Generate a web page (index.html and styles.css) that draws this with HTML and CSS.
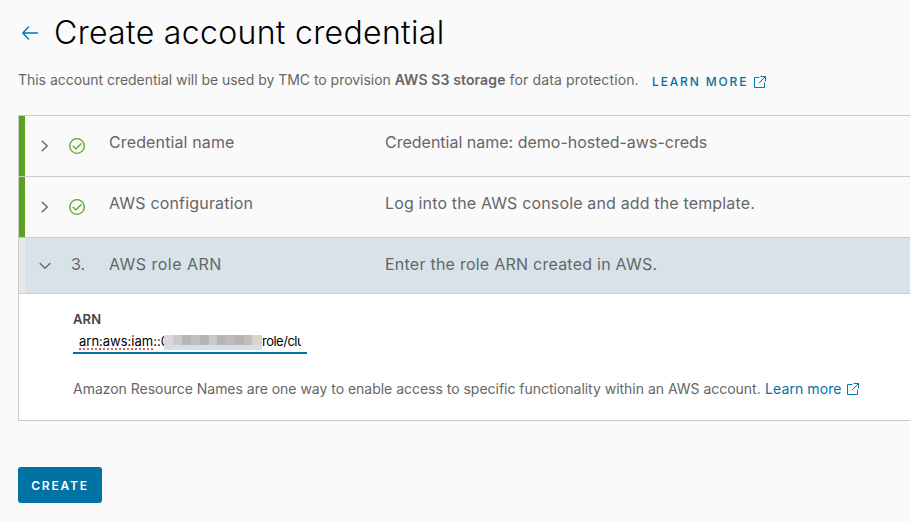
FILE: index.html
```html
<!DOCTYPE html>
<html lang="en">
<head>
<meta charset="utf-8">
<title>Create account credential</title>
<link rel="stylesheet" href="styles.css">
</head>
<body>
<main class="page">
  <header class="heading">
    <svg class="back" width="18" height="16" viewBox="0 0 18 16"><path d="M16.5 8H2M7.5 2L1.8 8L7.5 14"/></svg>
    <h1 class="title">Create account credential</h1>
  </header>
  <div class="intro">
    <p class="intro-text">This account credential will be used by TMC to provision <b>AWS S3 storage</b><span class="intro-end"> for data protection.</span></p>
    <a class="more-caps">LEARN MORE</a>
    <svg class="ext" width="14" height="14" viewBox="0 0 14 14"><path d="M6 2.5H1.5V12.5H11.5V8M8 1.5H12.5V6M12.5 1.5L6 8"/></svg>
  </div>
  <section class="stepper">
    <div class="step done">
      <svg class="caret" width="10" height="14" viewBox="0 0 10 14"><path d="M2.2 2.2L7.2 7L2.2 11.8"/></svg>
      <svg class="check" width="16" height="16" viewBox="0 0 16 16"><circle cx="8" cy="8" r="7.3"/><path d="M4.2 8.3L6.8 10.9L12 5.7"/></svg>
      <span class="name n1">Credential name</span>
      <span class="desc d1">Credential name: demo-hosted-aws-creds</span>
    </div>
    <div class="step done">
      <svg class="caret" width="10" height="14" viewBox="0 0 10 14"><path d="M2.2 2.2L7.2 7L2.2 11.8"/></svg>
      <svg class="check" width="16" height="16" viewBox="0 0 16 16"><circle cx="8" cy="8" r="7.3"/><path d="M4.2 8.3L6.8 10.9L12 5.7"/></svg>
      <span class="name n2">AWS configuration</span>
      <span class="desc d2">Log into the AWS console and add the template.</span>
    </div>
    <div class="step open">
      <svg class="caret-down" width="12" height="8" viewBox="0 0 12 8"><path d="M1.2 1.5L6 6.3L10.8 1.5"/></svg>
      <span class="number">3.</span>
      <span class="name n3">AWS role ARN</span>
      <span class="desc d3">Enter the role ARN created in AWS.</span>
    </div>
    <div class="panel">
      <label class="label">ARN</label>
      <div class="field">
        <span class="arn-start"><span class="spell">arn:aws:iam</span>::0</span>
        <span class="mask"></span>
        <span class="arn-end">role/clu</span>
      </div>
      <div class="help">
        <span class="help-text">Amazon Resource Names are one way to enable access to specific functionality within an AWS account.</span>
        <a class="more">Learn more</a>
        <svg class="ext" width="14" height="14" viewBox="0 0 14 14"><path d="M6 2.5H1.5V12.5H11.5V8M8 1.5H12.5V6M12.5 1.5L6 8"/></svg>
      </div>
    </div>
  </section>
  <button class="create">CREATE</button>
</main>
</body>
</html>
```
FILE: styles.css
```css
* { box-sizing: border-box; }
body { margin: 0; background: #fafafa; color: #666; font: 14px/20px Inter, "Open Sans", sans-serif; overflow: hidden; white-space: nowrap; }
.page { padding: 13px 0 0 18px; height: 522px; }
svg { flex: none; fill: none; stroke-linecap: round; stroke-linejoin: round; }
.heading { display: flex; align-items: center; height: 40px; padding-left: 3px; }
.back { stroke: #0079b8; stroke-width: 1.4; }
.title { margin: 0 0 0 15px; font-size: 32px; font-weight: 300; line-height: 40px; letter-spacing: 0.33px; color: #000; }
.intro { display: flex; align-items: center; height: 20px; margin-top: 17px; }
.intro-text { margin: 0; width: 634px; letter-spacing: -0.03px; }
.intro-text b { font-weight: 600; letter-spacing: 0.12px; }
.intro-end { letter-spacing: 0.13px; }
.more-caps { width: 101px; font-size: 12px; font-weight: 500; letter-spacing: 1.85px; color: #0072a3; padding-top: 3px; }
.ext { stroke: #0079b8; stroke-width: 1; margin-top: 3px; }
.stepper { margin-top: 25px; border: 1px solid #ccc; border-right: 0; }
.step { display: flex; height: 61px; border-bottom: 1px solid #ccc; box-shadow: inset 6px 0 #5aa220; padding-left: 21px; align-items: center; font-size: 16px; line-height: 24px; }
.caret { stroke: #666; stroke-width: 1.5; margin-right: 19px; }
.check { stroke: #5aa220; stroke-width: 1.3; margin-right: 24px; }
.name { width: 276px; margin-top: -9px; }
.desc { margin-top: -9px; }
.n1 { letter-spacing: 0.13px; }
.n2 { letter-spacing: 0.18px; }
.n3 { letter-spacing: 0.47px; }
.d2 { letter-spacing: 0.15px; }
.d3 { letter-spacing: 0.24px; }
.open { height: 56px; box-shadow: inset 6px 0 #e8e8e8; background: #d8e3e9; padding-left: 20px; }
.caret-down { stroke: #666; stroke-width: 1.4; margin-right: 20px; }
.number { width: 38px; margin-top: -4px; }
.open .name, .open .desc { margin-top: -4px; }
.panel { background: #fff; height: 126px; padding: 15px 0 0 54px; }
.label { display: block; font-size: 13px; font-weight: 600; line-height: 20px; letter-spacing: 0.15px; color: #454545; }
.field { display: flex; width: 234px; height: 25px; border-bottom: 2px solid #0072a3; padding: 1px 6px 0; font-size: 13px; line-height: 22px; color: #000; }
.arn-start { width: 85px; overflow: hidden; letter-spacing: 0; }
.mask {
  width: 98px; height: 15px; margin-top: 5px;
  background:
    linear-gradient(#cfe2eb, #cfe2eb) 0 10px / 98px 5px no-repeat,
    linear-gradient(90deg, #ddd8d8 0 9px, #cdcaca 9px 18px, #b9b5b5 18px 27px, #c3bfbf 27px 36px, #b9b4b4 36px 45px, #cdc8c8 45px 53px, #b9b4b4 53px 62px, #c0baba 62px 71px, #b8b3b3 71px 80px, #c3bdbd 80px 88px, #dcd2d2 88px 98px);
}
.arn-end { width: 39px; overflow: hidden; letter-spacing: -0.5px; }
.spell { text-decoration: underline dotted #f05a50 2px; text-underline-offset: 2px; }
.help { display: flex; height: 20px; margin-top: 25px; }
.help-text { width: 692px; letter-spacing: -0.02px; }
.more { width: 81px; letter-spacing: 0.1px; color: #0072a3; }
.create { display: block; width: 84px; height: 36px; margin-top: 46px; padding: 0; border: 0; border-radius: 3px; background: #0072a3; color: #fff; font: 600 12px Inter, sans-serif; letter-spacing: 1.8px; }
```
